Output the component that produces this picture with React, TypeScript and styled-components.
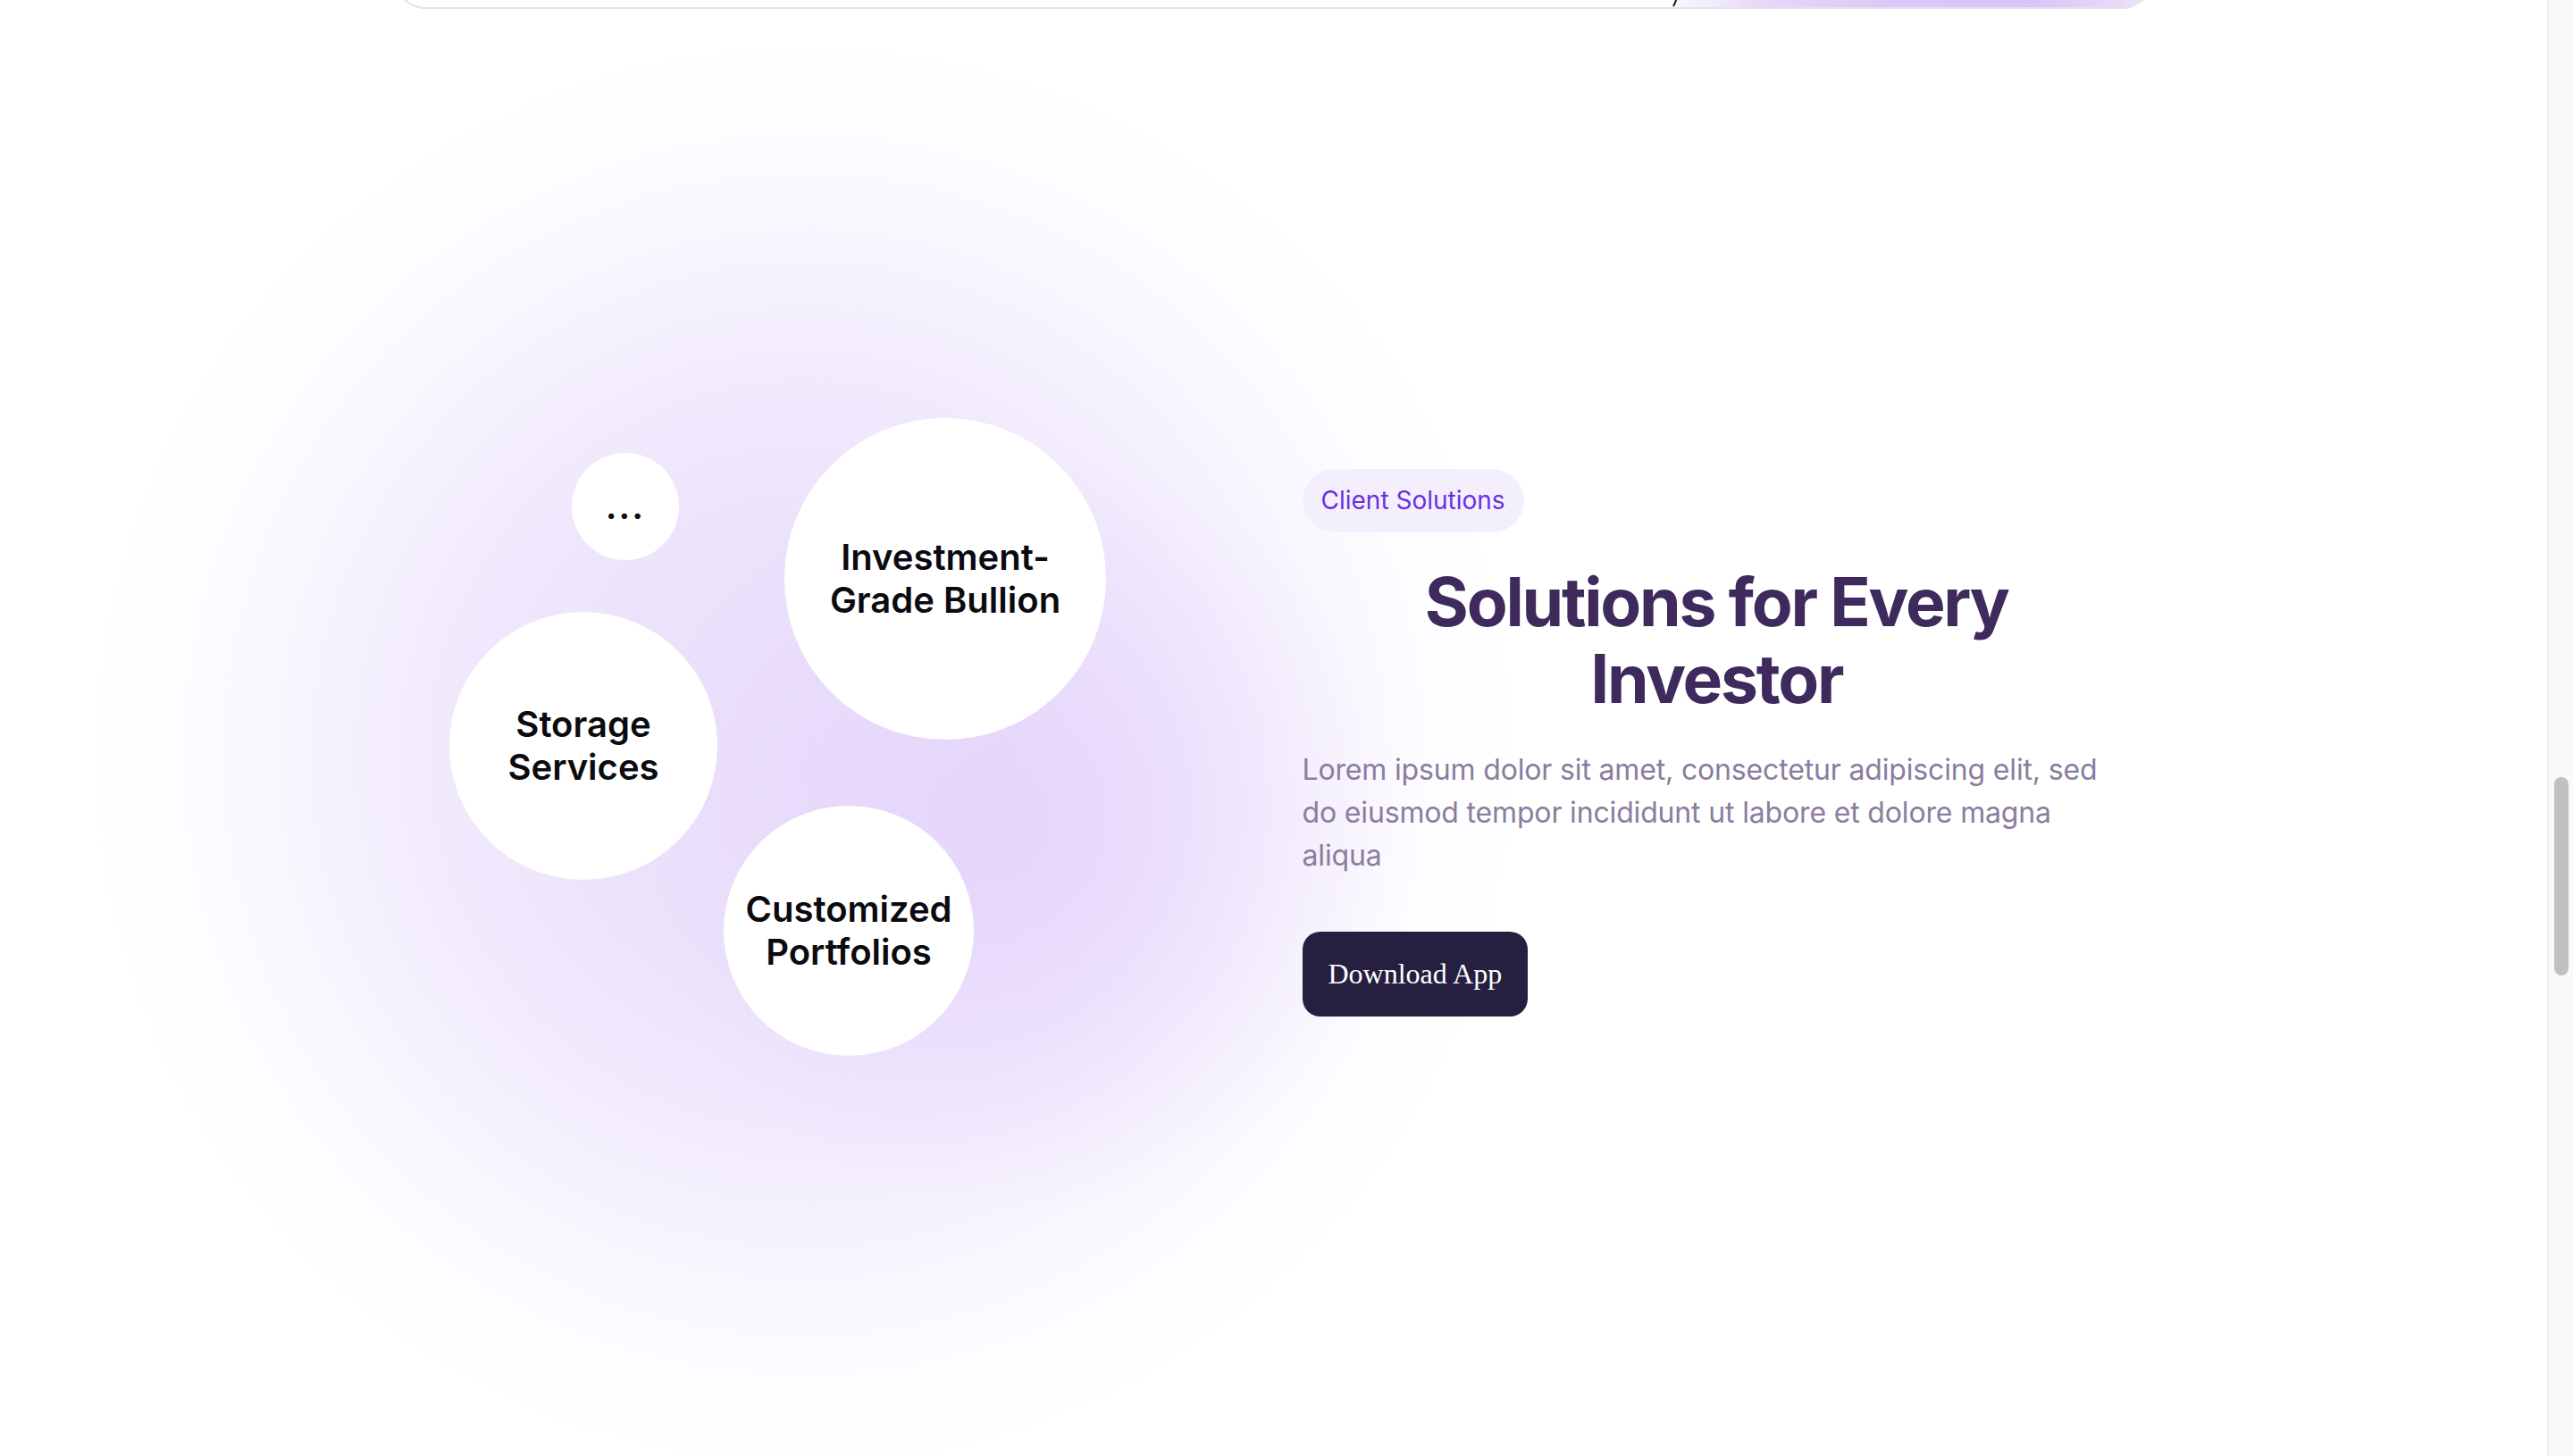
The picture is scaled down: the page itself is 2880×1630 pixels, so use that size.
import React from "react";
import styled, { createGlobalStyle } from "styled-components";

const GlobalStyle = createGlobalStyle`
  html, body {
    margin: 0;
    padding: 0;
    background: #ffffff;
    overflow: hidden;
  }
  * { box-sizing: border-box; }
`;

const Page = styled.div`
  display: flex;
  width: 2880px;
  height: 1630px;
  overflow: hidden;
`;

const Main = styled.main`
  flex: 1;
  display: flex;
  flex-direction: column;
  background:
    radial-gradient(circle 430px at 1140px 930px, rgba(224, 204, 251, 0.6) 0%, rgba(224, 204, 251, 0) 100%),
    radial-gradient(circle 800px at 900px 845px, #eadffb 0%, #ece2fb 30%, #f1eafd 52%, #f8f5fe 72%, #fdfcff 88%, #ffffff 100%);
`;

const TopCard = styled.div`
  width: 1970px;
  height: 120px;
  margin: -110px auto 0;
  display: flex;
  border: 2px solid #e4e4e6;
  border-radius: 36px;
  background: #ffffff;
  overflow: hidden;
  flex-shrink: 0;
`;

const CardBody = styled.div`
  flex: 1;
`;

const CardAccent = styled.div`
  width: 537px;
  display: flex;
  align-items: flex-end;
  background: linear-gradient(90deg, #fbf9fe 0%, #e6d9fa 18%, #dbc8f8 45%, #d9c4f8 75%, #ece3fb 100%);
`;

const Section = styled.section`
  width: 1945px;
  margin: 0 auto;
  display: grid;
  grid-template-columns: 1fr 1fr;
  column-gap: 64px;
  align-items: center;
`;

const Canvas = styled.div`
  position: relative;
  height: 1643px;
`;

const Bubble = styled.div<{ $size: number; $x: number; $y: number }>`
  position: absolute;
  left: ${(p) => p.$x}px;
  top: ${(p) => p.$y}px;
  width: ${(p) => p.$size}px;
  height: ${(p) => p.$size}px;
  border-radius: 50%;
  background: #ffffff;
  display: flex;
  align-items: center;
  justify-content: center;
  text-align: center;
  font-family: Inter, "Noto Sans", sans-serif;
  font-weight: 600;
  font-size: 40px;
  line-height: 48px;
  color: #0b0b0f;
`;

const Dots = styled.span`
  letter-spacing: 2px;
`;

const Content = styled.div`
  display: flex;
  flex-direction: column;
  align-items: flex-start;
  padding-right: 13px;
`;

const Badge = styled.span`
  display: inline-block;
  padding: 18px 21px;
  border-radius: 999px;
  background: #f4effd;
  color: #6b2fe2;
  font-family: Inter, "Noto Sans", sans-serif;
  font-size: 28px;
  line-height: 35px;
  font-weight: 400;
`;

const Heading = styled.h2`
  align-self: stretch;
  margin: 35px 0 35px;
  text-align: center;
  font-family: Inter, "Noto Sans", sans-serif;
  font-weight: 700;
  font-size: 75px;
  line-height: 86px;
  letter-spacing: -0.03em;
  color: #3e2a5c;
`;

const Lead = styled.p`
  margin: 0;
  font-family: Inter, "Noto Sans", sans-serif;
  font-size: 32px;
  line-height: 48px;
  letter-spacing: -0.005em;
  color: #8a7d9e;
`;

const DownloadButton = styled.button`
  margin-top: 61px;
  height: 95px;
  padding: 0 29px;
  border: none;
  border-radius: 20px;
  background: #271f40;
  color: #ffffff;
  font-family: "Liberation Serif", "Times New Roman", serif;
  font-size: 32px;
  cursor: pointer;
`;

const ScrollTrack = styled.div`
  width: 29px;
  flex-shrink: 0;
  background: #f9f9f9;
  border-left: 2px solid #ececec;
  padding: 870px 0 0 6px;
`;

const ScrollThumb = styled.div`
  width: 16px;
  height: 222px;
  border-radius: 8px;
  background: #c1c1c1;
`;

const bubbles = [
  { x: 187, y: 497, size: 120, label: "dots" },
  { x: 425, y: 458, size: 360, label: "Investment-\nGrade Bullion" },
  { x: 50, y: 675, size: 300, label: "Storage\nServices" },
  { x: 357, y: 892, size: 280, label: "Customized\nPortfolios" },
];

function renderLabel(label: string) {
  if (label === "dots") return <Dots>...</Dots>;
  const parts = label.split("\n");
  return (
    <span>
      {parts.map((p, i) => (
        <React.Fragment key={i}>
          {p}
          {i < parts.length - 1 && <br />}
        </React.Fragment>
      ))}
    </span>
  );
}

export default function App() {
  return (
    <>
      <GlobalStyle />
      <Page>
        <Main>
          <TopCard>
            <CardBody />
            <CardAccent>
              <svg width="14" height="120" viewBox="0 0 14 120">
                <path d="M5 108 Q4 114 1 119" stroke="#1a1a1a" strokeWidth="2" fill="none" />
              </svg>
            </CardAccent>
          </TopCard>
          <Section>
            <Canvas>
              {bubbles.map((b, i) => (
                <Bubble key={i} $x={b.x} $y={b.y} $size={b.size}>
                  {renderLabel(b.label)}
                </Bubble>
              ))}
            </Canvas>
            <Content>
              <Badge>Client Solutions</Badge>
              <Heading>
                Solutions for Every
                <br />
                Investor
              </Heading>
              <Lead>
                Lorem ipsum dolor sit amet, consectetur adipiscing elit, sed do eiusmod tempor
                incididunt ut labore et dolore magna aliqua
              </Lead>
              <DownloadButton>Download App</DownloadButton>
            </Content>
          </Section>
        </Main>
        <ScrollTrack>
          <ScrollThumb />
        </ScrollTrack>
      </Page>
    </>
  );
}
